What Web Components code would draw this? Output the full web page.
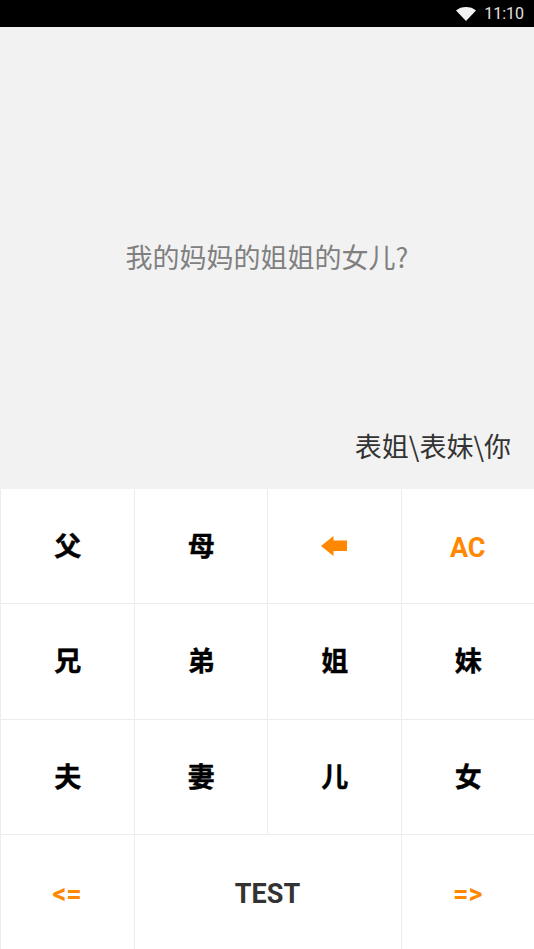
<!DOCTYPE html>
<html>
<head>
<meta charset="utf-8">
<title>亲戚计算器</title>
<style>
  html, body { margin: 0; padding: 0; background: #fff; }
</style>
</head>
<body>
<calc-app></calc-app>

<script>
const CJK = '"Noto Sans CJK SC", "Roboto", sans-serif';

class StatusBar extends HTMLElement {
  constructor() {
    super();
    this.attachShadow({ mode: 'open' });
    this.shadowRoot.innerHTML = `
      <style>
        :host { display: flex; justify-content: flex-end; align-items: center; height: 27px; background: #000; color: #e0e0e0; font: 16px Roboto, sans-serif; padding-right: 10px; box-sizing: border-box; }
        svg { width: 20px; height: 14px; margin-right: 8px; }
      </style>
      <svg viewBox="0 0 20 14"><path d="M0 3.4C2.8 1.2 6.2 0 10 0s7.2 1.2 10 3.4L10 14z" fill="#f2f2f2"/></svg>
      <span>11:10</span>
    `;
  }
}

class DisplayPanel extends HTMLElement {
  constructor() {
    super();
    this.attachShadow({ mode: 'open' });
    this.shadowRoot.innerHTML = `
      <style>
        :host { display: flex; flex-direction: column; height: 462px; background: #f2f2f2; box-sizing: border-box; font-family: ${CJK}; }
        .question { flex: 1; display: flex; align-items: center; justify-content: center; color: #808080; font-size: 27px; padding-top: 57px; }
        .answer { color: #333; font-size: 27px; text-align: right; padding: 0 23px 25px 0; line-height: 36px; }
      </style>
      <div class="question"><slot name="question"></slot></div>
      <div class="answer"><slot name="answer"></slot></div>
    `;
  }
}

class CalcKey extends HTMLElement {
  constructor() {
    super();
    this.attachShadow({ mode: 'open' });
    this.shadowRoot.innerHTML = `
      <style>
        :host { display: flex; align-items: center; justify-content: center; box-sizing: border-box; padding: 0 0 3px 1px; background: #fff; color: #000; font: 700 27px ${CJK}; -webkit-text-stroke: 0.4px #000; min-width: 0; min-height: 0; }
        :host([accent]) { color: #ff8800; -webkit-text-stroke: 0; padding: 0; }
        :host([latin]) { font-family: Roboto, sans-serif; padding: 4px 0 0; -webkit-text-stroke: 0; }
        :host([wide]) { grid-column: span 2; color: #333; }
      </style>
      <slot></slot>
    `;
  }
}

class KeyPad extends HTMLElement {
  constructor() {
    super();
    this.attachShadow({ mode: 'open' });
    this.shadowRoot.innerHTML = `
      <style>
        :host { display: grid; height: 460px; grid-template-columns: repeat(4, 1fr); grid-template-rows: repeat(4, 1fr); gap: 1px; padding-left: 1px; background: #ececec; box-sizing: border-box; }
      </style>
      <slot></slot>
    `;
  }
}

class CalcApp extends HTMLElement {
  constructor() {
    super();
    this.attachShadow({ mode: 'open' });
    const keys = ['父', '母', null, 'AC', '兄', '弟', '姐', '妹', '夫', '妻', '儿', '女'];
    this.shadowRoot.innerHTML = `
      <style>
        :host { display: block; width: 534px; height: 949px; overflow: hidden; }
        svg { width: 26px; height: 20px; display: block; }
      </style>
      <status-bar></status-bar>
      <display-panel>
        <span slot="question">我的妈妈的姐姐的女儿?</span>
        <span slot="answer">表姐\\表妹\\你</span>
      </display-panel>
      <key-pad>
        ${keys.map((k) => {
          if (k === null) return `<calc-key accent><svg viewBox="0 0 26 20"><path d="M0 10 12.5 0V4.5H26V15H12.5V20Z" fill="#ff8800"/></svg></calc-key>`;
          if (k === 'AC') return `<calc-key accent latin>AC</calc-key>`;
          return `<calc-key>${k}</calc-key>`;
        }).join('')}
        <calc-key accent latin>&lt;=</calc-key>
        <calc-key wide latin>TEST</calc-key>
        <calc-key accent latin>=&gt;</calc-key>
      </key-pad>
    `;
  }
}

customElements.define('status-bar', StatusBar);
customElements.define('display-panel', DisplayPanel);
customElements.define('calc-key', CalcKey);
customElements.define('key-pad', KeyPad);
customElements.define('calc-app', CalcApp);
</script>
</body>
</html>
